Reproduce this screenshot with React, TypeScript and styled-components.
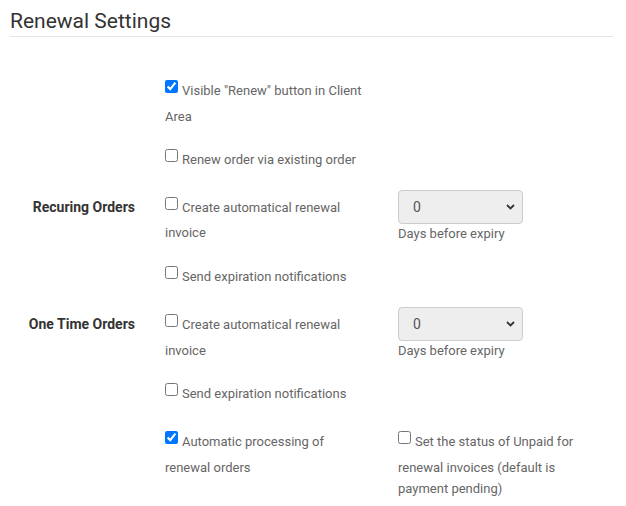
import styled, { createGlobalStyle } from 'styled-components'

const GlobalStyle = createGlobalStyle`
  body {
    margin: 0;
    background: #fff;
    font-family: Roboto, "Liberation Sans", Arial, sans-serif;
  }
`

const Page = styled.div`
  padding: 0 13px 0 10px;
`

const Heading = styled.h2`
  margin: 0;
  padding: 10px 0 4px;
  font-size: 21px;
  line-height: 22px;
  font-weight: 400;
  color: #333;
  border-bottom: 1px solid #e5e5e5;
`

const Form = styled.div`
  display: grid;
  grid-template-columns: 155px 233px 203px;
  row-gap: 22.4px;
  align-items: start;
  margin-top: 43px;
`

const RowLabel = styled.div`
  grid-column: 1;
  padding-right: 30px;
  text-align: right;
  font-size: 14px;
  line-height: 21px;
  font-weight: 700;
  color: #333;
`

const Check = styled.label<{ $col?: number }>`
  grid-column: ${(p) => p.$col ?? 2};
  display: block;
  max-width: 201px;
  font-size: 13px;
  line-height: 21px;
  color: #666;
  cursor: pointer;
`

// the box hangs below the text baseline a little, so the first line is taller
const Box = styled.input`
  width: 13px;
  height: 13px;
  margin: 0 4px 12.5px 0;
  vertical-align: 2px;
`

const SelectBlock = styled.div`
  grid-column: 3;
  margin-top: -7px;
`

const SelectWrap = styled.div`
  position: relative;
  width: 125px;
`

const Select = styled.select`
  appearance: none;
  display: block;
  width: 100%;
  height: 34px;
  padding: 0 26px 0 14px;
  border: 1px solid #ccc;
  border-radius: 4px;
  background: #eee;
  font-family: inherit;
  font-size: 14px;
  color: #555;
`

const Chevron = styled.svg`
  position: absolute;
  right: 8px;
  top: 14px;
  pointer-events: none;
`

const Hint = styled.div`
  font-size: 13px;
  line-height: 20px;
  color: #666;
`

type Item = { text: string; checked?: boolean }

function CheckItem({ text, checked, col }: Item & { col?: number }) {
  return (
    <Check $col={col}>
      <Box type="checkbox" defaultChecked={checked} />
      {text}
    </Check>
  )
}

function DaysSelect() {
  return (
    <SelectBlock>
      <SelectWrap>
        <Select defaultValue="0">
          {[0, 1, 2, 3, 5, 7, 14, 30].map((d) => (
            <option key={d} value={d}>
              {d}
            </option>
          ))}
        </Select>
        <Chevron width="9" height="6" viewBox="0 0 9 6" aria-hidden="true">
          <path d="M1 1 L4.5 4.5 L8 1" fill="none" stroke="#333" strokeWidth="1.8" />
        </Chevron>
      </SelectWrap>
      <Hint>Days before expiry</Hint>
    </SelectBlock>
  )
}

export default function App() {
  return (
    <Page>
      <GlobalStyle />
      <Heading>Renewal Settings</Heading>
      <Form>
        <CheckItem text={'Visible "Renew" button in Client Area'} checked />
        <CheckItem text="Renew order via existing order" />

        <RowLabel>Recuring Orders</RowLabel>
        <CheckItem text="Create automatical renewal invoice" />
        <DaysSelect />
        <CheckItem text="Send expiration notifications" />

        <RowLabel>One Time Orders</RowLabel>
        <CheckItem text="Create automatical renewal invoice" />
        <DaysSelect />
        <CheckItem text="Send expiration notifications" />

        <CheckItem text="Automatic processing of renewal orders" checked />
        <CheckItem
          col={3}
          text="Set the status of Unpaid for renewal invoices (default is payment pending)"
        />
      </Form>
    </Page>
  )
}
